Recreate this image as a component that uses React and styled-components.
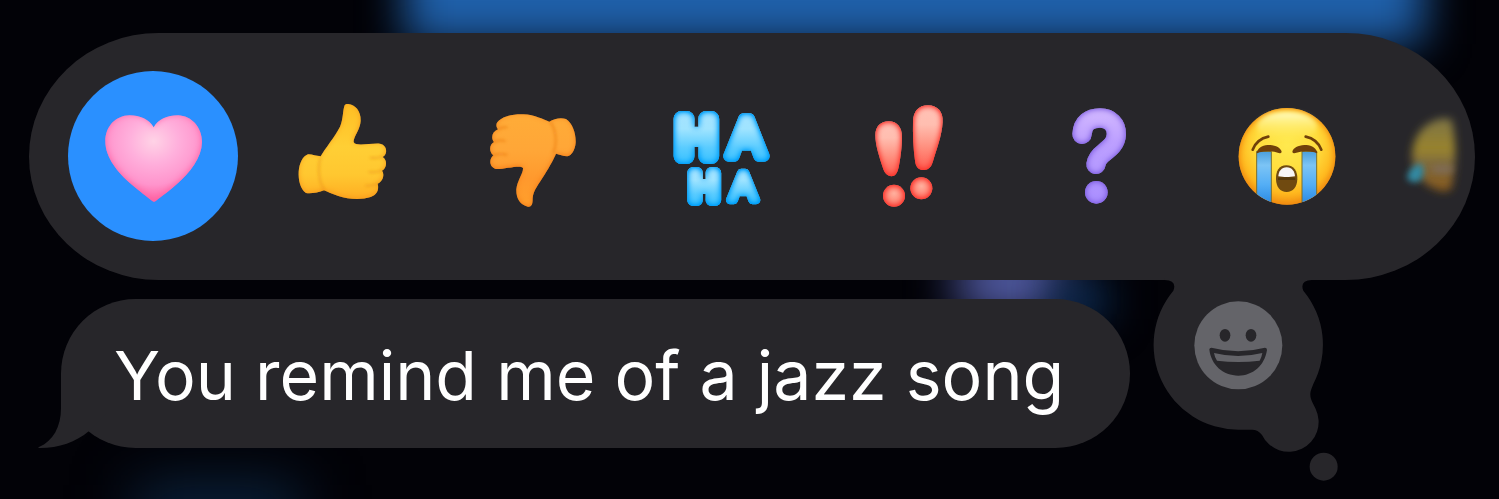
import React, { useState } from "react";
import styled, { createGlobalStyle } from "styled-components";

const surface = "#27262a";

const GlobalStyle = createGlobalStyle`
  * { box-sizing: border-box; }
  body {
    margin: 0;
    background: #020207;
    font-family: Inter, "Liberation Sans", sans-serif;
  }
`;

const Screen = styled.main`
  position: relative;
  overflow: hidden;
  min-height: 100vh;
  padding: 33px 24px 18px 29px;
`;

/* Out-of-focus colour of the conversation behind the menu */
const Glow = styled.div`
  position: absolute;
  pointer-events: none;
  top: ${(p) => p.$top};
  left: ${(p) => p.$left};
  width: ${(p) => p.$width};
  height: ${(p) => p.$height};
  background: ${(p) => p.$color};
  filter: blur(${(p) => p.$blur});
`;

const TapbackBar = styled.div`
  position: relative;
  display: flex;
  gap: 19px;
  padding: 38px 0 39px 39px;
  overflow: hidden;
  border-radius: 130px / 124px;
  background: ${surface};
`;

const Tapback = styled.button`
  flex: none;
  display: grid;
  place-items: center;
  width: 170px;
  height: 170px;
  padding: 0;
  border: 0;
  border-radius: 50%;
  background: ${(p) => (p.$selected ? "#2a90ff" : "transparent")};
  cursor: pointer;
`;

const Glyph = styled.svg`
  display: block;
  width: 130px;
  height: 130px;
  overflow: visible;
`;

const Conversation = styled.div`
  position: relative;
  display: flex;
  align-items: flex-start;
  gap: 24px;
  padding-left: 32px;
`;

const Message = styled.p`
  position: relative;
  flex: none;
  margin: 19px 0 0;
  padding: 34px 66px 31px 53px;
  border-radius: 75px;
  background: ${surface};
  color: #fff;
  font-size: 68px;
  line-height: 84px;
  white-space: nowrap;
`;

const Tail = styled.svg`
  position: absolute;
  left: -24px;
  bottom: 0;
  width: 70px;
  height: 75px;
`;

const AddReaction = styled.button`
  flex: none;
  width: 184px;
  height: 201px;
  padding: 0;
  border: 0;
  background: none;
  cursor: pointer;
`;

const ThoughtBubble = styled.svg`
  display: block;
  width: 184px;
  height: 201px;
  overflow: visible;
`;

/* Shades a shape from its edge inwards, so that it looks inflated */
function EdgeShade({ id, color, blur, dy = 0, soft = 1, strength = 1 }) {
  return (
    <filter id={id} x="-40%" y="-40%" width="180%" height="180%" colorInterpolationFilters="sRGB">
      <feComponentTransfer in="SourceAlpha" result="outside">
        <feFuncA type="linear" slope="-1" intercept="1" />
      </feComponentTransfer>
      <feGaussianBlur in="outside" stdDeviation={blur} result="spread" />
      <feComponentTransfer in="spread" result="strong">
        <feFuncA type="linear" slope={strength} intercept="0" />
      </feComponentTransfer>
      <feOffset in="strong" dx="0" dy={dy} result="moved" />
      <feFlood floodColor={color} />
      <feComposite in2="moved" operator="in" />
      <feComposite in2="SourceAlpha" operator="in" result="shade" />
      <feMerge result="all">
        <feMergeNode in="SourceGraphic" />
        <feMergeNode in="shade" />
      </feMerge>
      <feGaussianBlur in="all" stdDeviation={soft} />
    </filter>
  );
}

function Fade({ id, stops, radial, ...rest }) {
  const Tag = radial ? "radialGradient" : "linearGradient";
  const direction = radial ? {} : { x1: 0, y1: 0, x2: 0, y2: 1 };
  return (
    <Tag id={id} {...direction} {...rest}>
      {stops.map(([offset, color]) => (
        <stop key={offset} offset={offset} stopColor={color} />
      ))}
    </Tag>
  );
}

function Heart() {
  return (
    <Glyph viewBox="204 213 390 390" aria-hidden="true">
      <defs>
        <Fade id="heartFill" radial cx=".5" cy=".3" r=".72" stops={[[0, "#ffd3e6"], [0.35, "#ffb0dc"], [0.7, "#ff94cc"], [1, "#ff5c9c"]]} />
        <EdgeShade id="heartEdge" color="#ff62a4" blur="9" dy="-4" />
      </defs>
      <path
        d="M401 322C388 298 359 286 329 286C286 287 256 320 256 364C256 414 294 458 334 493C361 516 382 531 394 541Q402 549 410 541C424 529 444 516 470 493C510 458 545 414 546 366C546 321 514 287 474 286C442 286 414 298 401 322Z"
        fill="url(#heartFill)"
        filter="url(#heartEdge)"
      />
    </Glyph>
  );
}

function ThumbUp() {
  return (
    <Glyph viewBox="-9 3 390 390" aria-hidden="true">
      <defs>
        <Fade id="upFill" stops={[[0, "#ffbe24"], [0.45, "#ffcf35"], [0.75, "#ffc730"], [1, "#ffad22"]]} />
        <EdgeShade id="upEdge" color="#f79a1c" blur="8" dy="-3" soft="1.5" />
        <filter id="upSoft"><feGaussianBlur stdDeviation="4" /></filter>
      </defs>
      <path
        d="M205 42C225 44 243 62 242 92C241 118 220 140 221 156C226 170 270 159 300 161C322 165 324 192 308 201C322 209 322 234 306 242C315 254 308 274 293 281C298 300 290 314 272 321C245 330 205 328 175 318C155 311 140 305 132 301C115 308 90 312 78 309C60 295 55 270 56 245C58 220 68 198 84 193C95 192 108 198 122 199C135 175 165 140 180 110C190 88 188 60 194 46C197 42 200 41 205 42Z"
        fill="url(#upFill)"
        filter="url(#upEdge)"
      />
      <g fill="none" stroke="#e88b12" strokeWidth="6" strokeLinecap="round" opacity=".5" filter="url(#upSoft)">
        <path d="M272 203Q290 206 307 200" />
        <path d="M268 246Q286 249 305 241" />
        <path d="M258 287Q276 289 292 281" />
        <path d="M121 203Q114 230 118 258Q122 285 132 298" />
      </g>
    </Glyph>
  );
}

function ThumbDown() {
  return (
    <Glyph viewBox="-12 3 390 390" aria-hidden="true">
      <defs>
        <Fade id="downFill" stops={[[0, "#ffac38"], [0.4, "#ffa637"], [0.7, "#ff992d"], [1, "#ffa02c"]]} />
        <EdgeShade id="downEdge" color="#f47d18" blur="8" dy="-3" soft="1.5" />
        <filter id="downSoft"><feGaussianBlur stdDeviation="4" /></filter>
      </defs>
      <path
        d="M82 97C95 80 125 72 160 73C195 74 222 90 238 95C252 86 272 82 288 87C308 100 318 130 317 158C315 180 305 196 292 199C280 199 268 193 258 191C252 205 240 228 225 252C205 285 190 300 188 325C188 345 184 351 174 350C150 345 138 325 139 298C142 270 160 250 159 234C150 224 105 238 78 237C58 232 56 208 70 196C56 185 58 163 72 156C62 145 66 125 84 118C78 112 78 102 82 97Z"
        fill="url(#downFill)"
        filter="url(#downEdge)"
      />
      <g fill="none" stroke="#e56d08" strokeWidth="6" strokeLinecap="round" opacity=".5" filter="url(#downSoft)">
        <path d="M84 118Q96 110 110 112" />
        <path d="M72 156Q88 148 104 153" />
        <path d="M70 196Q90 189 110 194" />
        <path d="M242 98Q256 118 257 145Q258 172 250 187" />
      </g>
    </Glyph>
  );
}

function HaHa() {
  return (
    <Glyph viewBox="0 3 390 390" aria-hidden="true">
      <defs>
        <Fade id="haTop" gradientUnits="userSpaceOnUse" x1="0" x2="0" y1="60" y2="222" stops={[[0, "#a5e2ff"], [0.35, "#a0e4ff"], [0.7, "#5accff"], [1, "#35c0ff"]]} />
        <Fade id="haLow" gradientUnits="userSpaceOnUse" x1="0" x2="0" y1="228" y2="348" stops={[[0, "#a5e2ff"], [0.35, "#a0e4ff"], [0.7, "#5accff"], [1, "#35c0ff"]]} />
        <EdgeShade id="haEdge" color="#009ffa" blur="9" strength="1.8" />
      </defs>
      <g fontFamily="'Liberation Sans', sans-serif" strokeLinejoin="round" filter="url(#haEdge)">
        <text fontSize="159" fill="url(#haTop)" stroke="url(#haTop)">
          <tspan x="67" y="197" strokeWidth="48">H</tspan>
          <tspan x="221" y="197" strokeWidth="34">A</tspan>
        </text>
        <text fontSize="118" fill="url(#haLow)" stroke="url(#haLow)">
          <tspan x="105" y="329" strokeWidth="36">H</tspan>
          <tspan x="225" y="331" strokeWidth="25">A</tspan>
        </text>
      </g>
    </Glyph>
  );
}

function Emphasis() {
  return (
    <Glyph viewBox="-18 3 390 390" aria-hidden="true">
      <defs>
        <Fade id="bangFill" stops={[[0, "#ffc2b6"], [0.3, "#ffbeb0"], [0.65, "#ff8f7e"], [1, "#ff5c50"]]} />
        <Fade id="bangDot" radial cx=".5" cy=".4" r=".6" stops={[[0, "#ffb09e"], [1, "#ff7464"]]} />
        <EdgeShade id="bangEdge" color="#fb3830" blur="9" strength="1.6" />
      </defs>
      <path d="M116 94C142 94 156 112 156 140C156 172 151 208 146 232C142 250 135 259 125 259C111 259 103 248 98 232C88 200 76 166 76 136C76 110 91 94 116 94Z" fill="url(#bangFill)" filter="url(#bangEdge)" />
      <path d="M234 46C263 46 280 66 278 96C276 137 259 180 249 214C244 232 235 240 222 240C205 240 197 230 195 212C190 176 188 132 189 94C190 64 206 46 234 46Z" fill="url(#bangFill)" filter="url(#bangEdge)" />
      <circle cx="132" cy="317" r="33" fill="url(#bangDot)" filter="url(#bangEdge)" />
      <circle cx="214" cy="295" r="33" fill="url(#bangDot)" filter="url(#bangEdge)" />
    </Glyph>
  );
}

function Question() {
  return (
    <Glyph viewBox="-51 3 390 390" aria-hidden="true">
      <defs>
        <Fade id="askFill" gradientUnits="userSpaceOnUse" x1="0" x2="0" y1="50" y2="345" stops={[[0, "#d4baff"], [0.35, "#bda0ff"], [0.7, "#b398ff"], [1, "#a98dff"]]} />
        <EdgeShade id="askEdge" color="#7d5de0" blur="9" strength="1.4" />
      </defs>
      <g filter="url(#askEdge)">
        <path d="M96 133C98 98 120 84 150 84C180 84 200 104 199 133C198 160 180 174 163 187C147 199 140 208 138 223" fill="none" stroke="url(#askFill)" strokeWidth="58" strokeLinecap="round" strokeLinejoin="round" />
        <circle cx="139" cy="307" r="34" fill="url(#askFill)" />
      </g>
    </Glyph>
  );
}

function Sobbing() {
  return (
    <Glyph viewBox="6 3 390 390" aria-hidden="true">
      <defs>
        <Fade id="sobFace" radial cx=".5" cy=".38" r=".64" stops={[[0, "#ffe94e"], [0.5, "#ffdc3c"], [0.78, "#ffb91f"], [1, "#f08a10"]]} />
        <Fade id="sobShine" stops={[[0, "#fffbc4"], [1, "#fff06200"]]} />
        <Fade id="sobTears" stops={[[0, "#4b9fdc"], [0.25, "#7cc4f5"], [0.6, "#54aef5"], [1, "#2484e0"]]} />
        <clipPath id="sobClip"><circle cx="201" cy="199" r="145" /></clipPath>
        <filter id="sobSoft" x="-20%" y="-20%" width="140%" height="140%"><feGaussianBlur stdDeviation="6" /></filter>
        <EdgeShade id="sobEdge" color="#f08a10" blur="9" strength="1.4" />
      </defs>
      <circle cx="201" cy="199" r="145" fill="url(#sobFace)" filter="url(#sobEdge)" />
      <ellipse cx="201" cy="110" rx="90" ry="44" fill="url(#sobShine)" filter="url(#sobSoft)" />
      <g clipPath="url(#sobClip)">
        <path d="M110 184H154V350H110Z" fill="url(#sobTears)" stroke="#7b7030" strokeWidth="3" />
        <path d="M246 184H290V350H246Z" fill="url(#sobTears)" stroke="#7b7030" strokeWidth="3" />
      </g>
      <g fill="none" stroke="#70400a" strokeLinecap="round">
        <path d="M98 179Q111 147 145 140" strokeWidth="8" />
        <path d="M304 179Q291 147 257 140" strokeWidth="8" />
      </g>
      <g fill="#70400a">
        <path d="M110 187C116 170 132 165 149 165C168 166 182 174 185 185Q184 191 176 189Q148 179 119 187Q110 192 110 187Z" />
        <path d="M292 187C286 170 270 165 253 165C234 166 220 174 217 185Q218 191 226 189Q254 179 283 187Q292 192 292 187Z" />
      </g>
      <path d="M199 226C222 226 233 244 232 268C231 292 219 306 200 306C180 306 169 292 168 268C167 244 177 226 199 226Z" fill="#704a10" />
      <path d="M200 232C216 232 224 244 225 259Q200 264 175 259C176 244 184 232 200 232Z" fill="#f7f4f5" />
      <path d="M174 263Q200 259 226 263V270H174Z" fill="#54360a" />
    </Glyph>
  );
}

function NextFace() {
  return (
    <Glyph viewBox="573 3 390 390" aria-hidden="true">
      <defs>
        <Fade id="nextFace" gradientUnits="userSpaceOnUse" x1="0" x2="0" y1="70" y2="310" stops={[[0, "#77704a"], [0.45, "#9a842c"], [0.62, "#7d6a40"], [1, "#8a5816"]]} />
        <filter id="nextBlur" filterUnits="userSpaceOnUse" x="480" y="0" width="300" height="400"><feGaussianBlur stdDeviation="12" /></filter>
        <filter id="tearBlur" filterUnits="userSpaceOnUse" x="500" y="150" width="260" height="200"><feGaussianBlur stdDeviation="9" /></filter>
      </defs>
      <path d="M696 92C688 82 672 84 654 88C606 104 580 140 576 196C576 250 612 292 668 304Q684 304 694 296Q706 240 706 194Q706 140 696 92Z" fill="url(#nextFace)" filter="url(#nextBlur)" />
      <ellipse cx="668" cy="238" rx="34" ry="12" fill="#80706a" opacity=".6" filter="url(#tearBlur)" />
      <path d="M562 268Q560 236 600 220Q620 236 604 268Q584 286 562 268Z" fill="#3389a2" filter="url(#tearBlur)" />
    </Glyph>
  );
}

const tapbacks = [
  ["Heart", Heart],
  ["Thumbs up", ThumbUp],
  ["Thumbs down", ThumbDown],
  ["Ha ha", HaHa],
  ["Exclamation", Emphasis],
  ["Question mark", Question],
  ["Loudly crying", Sobbing],
  ["More", NextFace],
];

export default function App() {
  const [selected, setSelected] = useState("Heart");
  return (
    <>
      <GlobalStyle />
      <Screen>
        <Glow $top="-60px" $left="27%" $width="68%" $height="104px" $color="#1f60aa" $blur="22px" />
        <Glow $top="248px" $left="64%" $width="7%" $height="66px" $color="#5660ac" $blur="24px" />
        <Glow $top="280px" $left="70%" $width="4%" $height="40px" $color="#0a2a50" $blur="20px" />
        <Glow $top="484px" $left="9%" $width="11%" $height="60px" $color="#0b2440" $blur="30px" />
        <TapbackBar role="group" aria-label="Reactions">
          {tapbacks.map(([name, Icon]) => (
            <Tapback
              key={name}
              type="button"
              aria-label={name}
              aria-pressed={selected === name}
              $selected={selected === name}
              onClick={() => setSelected(name)}
            >
              <Icon />
            </Tapback>
          ))}
        </TapbackBar>
        <Conversation>
          <Message>
            <Tail viewBox="0 0 70 75" aria-hidden="true">
              <path d="M24 0V35C24 54 16 68 2 74Q0 75 3 75C22 75 39 69 52 58L70 40V0Z" fill={surface} />
            </Tail>
            You remind me of a jazz song
          </Message>
          <AddReaction type="button" aria-label="Add another reaction">
            <ThoughtBubble viewBox="72 60 552 603" aria-hidden="true">
              <path
                d="M104 60Q142 62 130 92A254 254 0 0 0 325 509H366Q384 509 396 525A88 88 0 0 0 557 447C548 426 534 412 545 385L550 372A254 254 0 0 0 520 92Q508 62 546 60V54H104Z"
                fill={surface}
              />
              <circle cx="581" cy="620" r="42" fill={surface} />
              <circle cx="325" cy="256" r="132" fill="#646469" />
              <g fill={surface}>
                <ellipse cx="285" cy="226" rx="16" ry="19" />
                <ellipse cx="363" cy="226" rx="16" ry="19" />
                <path d="M238 268Q239 262 248 264Q324 284 401 264Q411 262 411 270C404 317 368 347 325 347C280 347 243 316 238 268Z" />
              </g>
              <path d="M252 279Q324 297 397 279Q395 292 389 302Q325 310 261 302Q254 292 252 279Z" fill="#646469" />
            </ThoughtBubble>
          </AddReaction>
        </Conversation>
      </Screen>
    </>
  );
}
